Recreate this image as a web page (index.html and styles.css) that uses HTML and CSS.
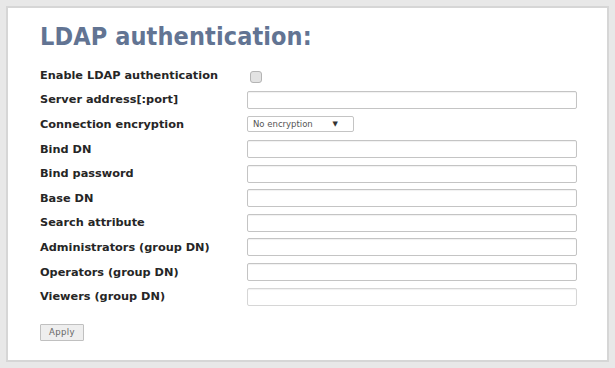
FILE: index.html
```html
<!DOCTYPE html>
<html lang="en">
<head>
    <meta charset="UTF-8">
    <title>LDAP authentication</title>
    <link rel="stylesheet" href="styles.css">
</head>
<body>
    <div class="panel">
        <h1>LDAP authentication:</h1>

        <form class="ldap-form">
            <label class="field-label" for="ldapEnable">Enable LDAP authentication</label>
            <div class="field"><input type="checkbox" id="ldapEnable" class="check"></div>

            <label class="field-label" for="server">Server address[:port]</label>
            <div class="field"><input type="text" id="server" class="text-input"></div>

            <label class="field-label" for="encryption">Connection encryption</label>
            <div class="field">
                <div class="select-box" id="encryption">
                    <span>No encryption</span>
                    <span class="arrow">&#9660;</span>
                </div>
            </div>

            <label class="field-label" for="bindDn">Bind DN</label>
            <div class="field"><input type="text" id="bindDn" class="text-input"></div>

            <label class="field-label" for="bindPw">Bind password</label>
            <div class="field"><input type="password" id="bindPw" class="text-input"></div>

            <label class="field-label" for="baseDn">Base DN</label>
            <div class="field"><input type="text" id="baseDn" class="text-input"></div>

            <label class="field-label" for="searchAttr">Search attribute</label>
            <div class="field"><input type="text" id="searchAttr" class="text-input"></div>

            <label class="field-label" for="admins">Administrators (group DN)</label>
            <div class="field"><input type="text" id="admins" class="text-input"></div>

            <label class="field-label" for="operators">Operators (group DN)</label>
            <div class="field"><input type="text" id="operators" class="text-input"></div>

            <label class="field-label" for="viewers">Viewers (group DN)</label>
            <div class="field"><input type="text" id="viewers" class="text-input faint"></div>
        </form>

        <button class="apply-btn" type="button">Apply</button>
    </div>
</body>
</html>
```

FILE: styles.css
```css
* {
    margin: 0;
    padding: 0;
    box-sizing: border-box;
}

body {
    background: #e8e8e8;
    padding: 6px;
    font-family: "DejaVu Sans", Verdana, sans-serif;
}

.panel {
    background: #fff;
    border: 2px solid #d6d6d6;
    height: 356px;
    padding: 15px 32px 0 32px;
}

h1 {
    font-family: "DejaVu Sans Condensed", "DejaVu Sans", sans-serif;
    font-size: 25px;
    font-weight: bold;
    color: #627493;
    line-height: 28px;
    letter-spacing: 0.1px;
    margin-bottom: 12px;
}

.ldap-form {
    display: grid;
    grid-template-columns: 207px 330px;
    grid-auto-rows: 24.6px;
    align-items: center;
}

.field-label {
    font-family: "DejaVu Sans", Verdana, sans-serif;
    font-size: 11.3px;
    font-weight: bold;
    color: #262626;
}

.field {
    display: flex;
    align-items: center;
}

.text-input {
    width: 330px;
    height: 18px;
    border: 1px solid #c4c4c4;
    border-radius: 2px;
    box-shadow: inset 0 1px 1px rgba(0, 0, 0, 0.06);
    background: #fff;
}

.text-input.faint {
    border-color: #d6d6d6;
}

.check {
    appearance: none;
    width: 12px;
    height: 12px;
    margin-left: 3px;
    margin-top: 3px;
    border: 1px solid #b4b4b4;
    border-radius: 3px;
    background: #e2e2e2;
}

.select-box {
    width: 107px;
    height: 16px;
    border: 1px solid #c4c4c4;
    border-radius: 2px;
    background: #fff;
    display: flex;
    align-items: center;
    justify-content: space-between;
    padding: 0 15px 0 5px;
    font-size: 8.5px;
    color: #555;
}

.select-box .arrow {
    font-size: 7px;
    color: #333;
}

.apply-btn {
    margin-top: 15px;
    width: 44px;
    height: 17px;
    background: #eeeeee;
    border: 1px solid #c0c0c0;
    border-radius: 1px;
    font-family: "DejaVu Sans", sans-serif;
    font-size: 8.5px;
    letter-spacing: 0.4px;
    color: #666;
}
```
